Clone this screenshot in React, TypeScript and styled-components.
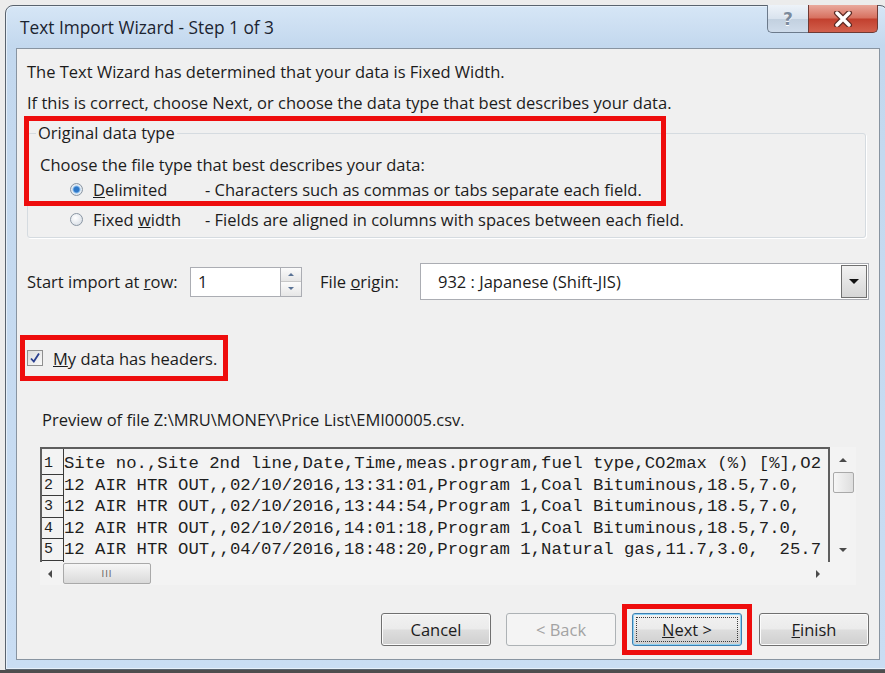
import React from 'react';
import styled, { createGlobalStyle, css } from 'styled-components';

const GlobalStyle = createGlobalStyle`
  html, body {
    margin: 0;
    padding: 0;
  }
  body {
    background: #e6e6e6;
    font-family: 'Open Sans', 'Noto Sans', sans-serif;
    color: #1c1c1c;
  }
`;

const previewRows = [
  'Site no.,Site 2nd line,Date,Time,meas.program,fuel type,CO2max (%) [%],O2',
  '12 AIR HTR OUT,,02/10/2016,13:31:01,Program 1,Coal Bituminous,18.5,7.0,',
  '12 AIR HTR OUT,,02/10/2016,13:44:54,Program 1,Coal Bituminous,18.5,7.0,',
  '12 AIR HTR OUT,,02/10/2016,14:01:18,Program 1,Coal Bituminous,18.5,7.0,',
  '12 AIR HTR OUT,,04/07/2016,18:48:20,Program 1,Natural gas,11.7,3.0,  25.7',
];

const App = () => {
  return (
    <Screen>
      <GlobalStyle />
      <Window>
        <TitleBar>
          <Title>Text Import Wizard - Step 1 of 3</Title>
          <CaptionButtons>
            <HelpButton>?</HelpButton>
            <CloseButton>
              <svg width="22" height="16" viewBox="0 0 22 16">
                <path d="M5 2 L17 14 M17 2 L5 14" stroke="#5b2a24" strokeWidth="6" strokeLinecap="round" />
                <path d="M5 2 L17 14 M17 2 L5 14" stroke="#ffffff" strokeWidth="3.5" strokeLinecap="round" />
              </svg>
            </CloseButton>
          </CaptionButtons>
        </TitleBar>

        <Panel>
          <Line>The Text Wizard has determined that your data is Fixed Width.</Line>
          <Line $top={11}>If this is correct, choose Next, or choose the data type that best describes your data.</Line>

          <Group>
            <Legend>Original data type</Legend>
            <Marker />
            <GroupText>Choose the file type that best describes your data:</GroupText>
            <RadioRow $top={4}>
              <Radio $checked />
              <RadioLabel>
                <u>D</u>elimited
              </RadioLabel>
              <span>- Characters such as commas or tabs separate each field.</span>
            </RadioRow>
            <RadioRow $top={10}>
              <Radio />
              <RadioLabel>
                Fixed <u>w</u>idth
              </RadioLabel>
              <span>- Fields are aligned in columns with spaces between each field.</span>
            </RadioRow>
          </Group>

          <ImportRow>
            <FieldLabel $width={163}>
              Start import at <u>r</u>ow:
            </FieldLabel>
            <NumberBox>1</NumberBox>
            <Spinner>
              <SpinHalf>
                <Arrow $dir="up" $size={3} $color="#5a7395" />
              </SpinHalf>
              <SpinHalf>
                <Arrow $dir="down" $size={3} $color="#5a7395" />
              </SpinHalf>
            </Spinner>
            <FieldLabel $width={100} $left={18}>
              File <u>o</u>rigin:
            </FieldLabel>
            <Select>
              <SelectValue>932 : Japanese (Shift-JIS)</SelectValue>
              <DropButton>
                <Arrow $dir="down" $size={5} $color="#111" />
              </DropButton>
            </Select>
          </ImportRow>

          <CheckHighlight>
            <CheckBox>
              <svg width="12" height="12" viewBox="0 0 12 12">
                <path d="M2 6.5 L4.8 9.5 L10 1.5" fill="none" stroke="#2a3f8f" strokeWidth="1.8" />
              </svg>
            </CheckBox>
            <span>
              <u>M</u>y data has headers.
            </span>
          </CheckHighlight>

          <PreviewLabel>Preview of file Z:\MRU\MONEY\Price List\EMI00005.csv.</PreviewLabel>

          <Preview>
            <PreviewText>
              <Gutter>
                {previewRows.map((_, i) => (
                  <RowNumber key={i}>{i + 1}</RowNumber>
                ))}
                <RowNumber />
              </Gutter>
              <Lines>
                {previewRows.map((row, i) => (
                  <CodeLine key={i}>{row}</CodeLine>
                ))}
              </Lines>
            </PreviewText>
            <VScroll>
              <Arrow $dir="up" $size={4} $color="#4a4a4a" />
              <VThumb />
              <Spacer />
              <Arrow $dir="down" $size={4} $color="#4a4a4a" />
            </VScroll>
            <HScroll>
              <Arrow $dir="left" $size={4} $color="#4a4a4a" />
              <HThumb>III</HThumb>
              <Spacer />
              <Arrow $dir="right" $size={4} $color="#4a4a4a" />
            </HScroll>
          </Preview>

          <ButtonRow>
            <Button>Cancel</Button>
            <Button disabled style={{ marginLeft: 15 }}>
              &lt; Back
            </Button>
            <NextHighlight>
              <Button $focused>
                <u>N</u>ext &gt;
              </Button>
            </NextHighlight>
            <Button style={{ marginLeft: 7 }}>
              <u>F</u>inish
            </Button>
          </ButtonRow>
        </Panel>
      </Window>
      <Shade />
    </Screen>
  );
};

export default App;

const Screen = styled.div`
  width: 885px;
  height: 673px;
  overflow: hidden;
  display: flex;
  flex-direction: column;
  background: #ececec;
`;

const Window = styled.div`
  flex: none;
  box-sizing: border-box;
  width: 883px;
  height: 665px;
  margin: 5px 0 0 5px;
  padding: 0 7px 9px 10px;
  display: flex;
  flex-direction: column;
  border: 1px solid #59636e;
  border-radius: 8px 8px 0 0;
  background: linear-gradient(180deg, #d6e6f6 0%, #c3d8ee 40px, #c9ddf3 100%);
  box-shadow: inset 0 0 0 1px #e6f0fa;
`;

const Shade = styled.div`
  flex: 1;
  background: #4e4e4e;
`;

const TitleBar = styled.div`
  height: 42px;
  flex: none;
  display: flex;
  justify-content: space-between;
  align-items: flex-start;
`;

const Title = styled.div`
  padding: 12px 0 0 4px;
  font-size: 17.3px;
  line-height: 20px;
  color: #1b2430;
`;

const CaptionButtons = styled.div`
  display: flex;
  margin: -1px 2px 0 0;
`;

const captionButton = css`
  height: 28px;
  box-sizing: border-box;
  display: flex;
  align-items: center;
  justify-content: center;
  border: 1px solid #6c7a8b;
  border-top: none;
`;

const HelpButton = styled.div`
  ${captionButton}
  width: 41px;
  border-radius: 0 0 0 5px;
  border-right: none;
  background: linear-gradient(180deg, #eef3f9 0%, #d9e3ee 50%, #c2d0df 51%, #cfdceb 100%);
  font: 700 17px 'DejaVu Sans', sans-serif;
  color: #7b8a9c;
  text-shadow: 0 1px 0 #fff;
`;

const CloseButton = styled.div`
  ${captionButton}
  width: 70px;
  border-radius: 0 0 5px 0;
  border-color: #6e3a34;
  background: linear-gradient(180deg, #e9a99d 0%, #d7705f 48%, #c2402e 52%, #d2604d 100%);
`;

const Panel = styled.div`
  flex: 1;
  display: flex;
  flex-direction: column;
  box-sizing: border-box;
  padding: 13px 10px 0 10px;
  background: #f0f0f0;
  border: 1px solid #8894a1;
  font-size: 16.5px;
  color: #1c1c1c;
`;

const Line = styled.div<{ $top?: number }>`
  line-height: 20px;
  margin-top: ${({ $top }) => $top ?? 0}px;
  white-space: nowrap;
`;

const Group = styled.fieldset`
  position: relative;
  margin: 10px 3px 0 0;
  padding: 0 8px 8px;
  border: 1px solid #d5dbe0;
  border-radius: 3px;
  box-shadow: 1px 1px 0 #ffffff;
`;

const Legend = styled.legend`
  padding: 0 2px;
  line-height: 20px;
`;

// red annotation frame laid over the legend and the first option
const Marker = styled.div`
  position: absolute;
  left: -4px;
  top: -27px;
  width: 642px;
  height: 90px;
  box-sizing: border-box;
  border: 5px solid #ee0d0d;
  pointer-events: none;
`;

const GroupText = styled.div`
  margin: 12px 0 0 4px;
  line-height: 20px;
`;

const RadioRow = styled.div<{ $top: number }>`
  display: flex;
  align-items: center;
  height: 20px;
  margin: ${({ $top }) => $top}px 0 0 34px;
  white-space: nowrap;
`;

const Radio = styled.span<{ $checked?: boolean }>`
  width: 13px;
  height: 13px;
  flex: none;
  box-sizing: border-box;
  border-radius: 50%;
  border: 1px solid #8a96a3;
  background: radial-gradient(circle at 40% 35%, #ffffff 0%, #dfe4ea 70%, #c9d0d8 100%);
  ${({ $checked }) =>
    $checked &&
    css`
      background: radial-gradient(circle, #2e78c8 0 2.5px, #8fc0ee 3.5px, #e8eef4 4.5px, #cdd5de 100%);
    `}
`;

const RadioLabel = styled.span`
  width: 112px;
  margin-left: 10px;
`;

const ImportRow = styled.div`
  display: flex;
  align-items: center;
  height: 37px;
  margin-top: 25px;
`;

const FieldLabel = styled.span<{ $width: number; $left?: number }>`
  width: ${({ $width }) => $width}px;
  margin-left: ${({ $left }) => $left ?? 0}px;
  flex: none;
  white-space: nowrap;
`;

const NumberBox = styled.div`
  width: 90px;
  height: 30px;
  box-sizing: border-box;
  padding-left: 7px;
  line-height: 28px;
  background: #fff;
  border: 1px solid #abadb3;
  border-right: none;
`;

const Spinner = styled.div`
  width: 22px;
  height: 30px;
  box-sizing: border-box;
  display: flex;
  flex-direction: column;
  border: 1px solid #abadb3;
  background: #f4f4f4;
`;

const SpinHalf = styled.div`
  flex: 1;
  display: flex;
  align-items: center;
  justify-content: center;
  background: linear-gradient(180deg, #fbfbfb, #e6e6e6);
  & + & {
    border-top: 1px solid #c8c8c8;
  }
`;

const Select = styled.div`
  flex: 1;
  height: 37px;
  box-sizing: border-box;
  display: flex;
  align-items: stretch;
  background: #fff;
  border: 1px solid #abadb3;
`;

const SelectValue = styled.div`
  flex: 1;
  padding-left: 17px;
  line-height: 35px;
`;

const DropButton = styled.div`
  width: 24px;
  display: flex;
  align-items: center;
  justify-content: center;
  border: 1px solid #707070;
  margin: 1px;
  background: linear-gradient(180deg, #f2f2f2 0%, #e4e4e4 50%, #d6d6d6 100%);
`;

const Arrow = styled.span<{ $dir: 'up' | 'down' | 'left' | 'right'; $size: number; $color: string }>`
  width: 0;
  height: 0;
  flex: none;
  ${({ $dir, $size, $color }) => {
    const side = `${$size}px solid transparent`;
    const main = `${$size}px solid ${$color}`;
    if ($dir === 'up') return css`border-left: ${side}; border-right: ${side}; border-bottom: ${main};`;
    if ($dir === 'down') return css`border-left: ${side}; border-right: ${side}; border-top: ${main};`;
    if ($dir === 'left') return css`border-top: ${side}; border-bottom: ${side}; border-right: ${main};`;
    return css`border-top: ${side}; border-bottom: ${side}; border-left: ${main};`;
  }}
`;

const highlight = css`
  border: 5px solid #ee0d0d;
  box-sizing: border-box;
`;

const CheckHighlight = styled.div`
  ${highlight}
  width: 208px;
  height: 46px;
  margin: 35px 0 0 -7px;
  padding-left: 2px;
  display: flex;
  align-items: center;
  white-space: nowrap;
`;

const CheckBox = styled.span`
  width: 16px;
  height: 16px;
  flex: none;
  margin-right: 10px;
  box-sizing: border-box;
  display: flex;
  align-items: center;
  justify-content: center;
  border: 1px solid #8f8f8f;
  background: linear-gradient(135deg, #dcdcdc, #fafafa);
`;

const PreviewLabel = styled.div`
  margin: 29px 0 0 15px;
  line-height: 20px;
`;

const Preview = styled.div`
  width: 816px;
  height: 138px;
  margin: 17px 0 0 13px;
  display: grid;
  grid-template-columns: 790px 26px;
  grid-template-rows: 115px 23px;
  background: #f3f3f3;
`;

const PreviewText = styled.div`
  display: flex;
  overflow: hidden;
  box-sizing: border-box;
  border-top: 2px solid #5e5e5e;
  border-left: 2px solid #5e5e5e;
  border-right: 2px solid #5e5e5e;
  font-family: 'Liberation Mono', 'Courier New', monospace;
  font-size: 17.3px;
  color: #1e1e1e;
`;

const Gutter = styled.div`
  width: 21px;
  flex: none;
  padding-top: 4px;
  border-right: 1px solid #3a3a3a;
  margin-top: -1px;
  border-top: 1px solid #3a3a3a;
`;

const RowNumber = styled.div`
  height: 21.5px;
  box-sizing: border-box;
  padding-left: 2px;
  line-height: 21px;
  font-size: 15px;
  border-bottom: 1px solid #3a3a3a;
`;

const Lines = styled.div`
  padding-top: 4px;
  overflow: hidden;
`;

const CodeLine = styled.div`
  height: 21.5px;
  line-height: 21.5px;
  white-space: pre;
`;

const VScroll = styled.div`
  display: flex;
  flex-direction: column;
  align-items: center;
  padding: 11px 0 10px;
`;

const VThumb = styled.div`
  width: 21px;
  height: 21px;
  margin-top: 10px;
  box-sizing: border-box;
  border: 1px solid #a9a9a9;
  border-radius: 2px;
  background: linear-gradient(90deg, #f6f6f6, #dedede);
`;

const Spacer = styled.div`
  flex: 1;
`;

const HScroll = styled.div`
  display: flex;
  align-items: center;
  padding: 0 10px 0 8px;
`;

const HThumb = styled.div`
  width: 88px;
  height: 21px;
  margin-left: 11px;
  box-sizing: border-box;
  border: 1px solid #a9a9a9;
  border-radius: 2px;
  background: linear-gradient(180deg, #f6f6f6, #dadada);
  display: flex;
  align-items: center;
  justify-content: center;
  font: 9px 'DejaVu Sans', sans-serif;
  letter-spacing: 1px;
  color: #666;
`;

const ButtonRow = styled.div`
  display: flex;
  justify-content: flex-end;
  align-items: center;
  margin-top: 19px;
`;

const NextHighlight = styled.div`
  ${highlight}
  padding: 4px 5px;
  margin-left: 6px;
`;

const Button = styled.button<{ $focused?: boolean }>`
  width: 110px;
  height: 33px;
  padding: 0;
  border: 1px solid #707070;
  border-radius: 3px;
  background: linear-gradient(180deg, #f2f2f2 0%, #ebebeb 48%, #dddddd 52%, #cfcfcf 100%);
  box-shadow: inset 0 0 0 1px #fbfbfb;
  font-family: 'Open Sans', 'Noto Sans', sans-serif;
  font-size: 16.5px;
  color: #1c1c1c;
  &:disabled {
    border-color: #adb2b5;
    background: #f4f4f4;
    box-shadow: none;
    color: #a3a3a3;
  }
  ${({ $focused }) =>
    $focused &&
    css`
      border-color: #3c7fb1;
      box-shadow: inset 0 0 0 1px #8fd3f5;
      outline: 1px dotted #3a3a3a;
      outline-offset: -5px;
    `}
`;
